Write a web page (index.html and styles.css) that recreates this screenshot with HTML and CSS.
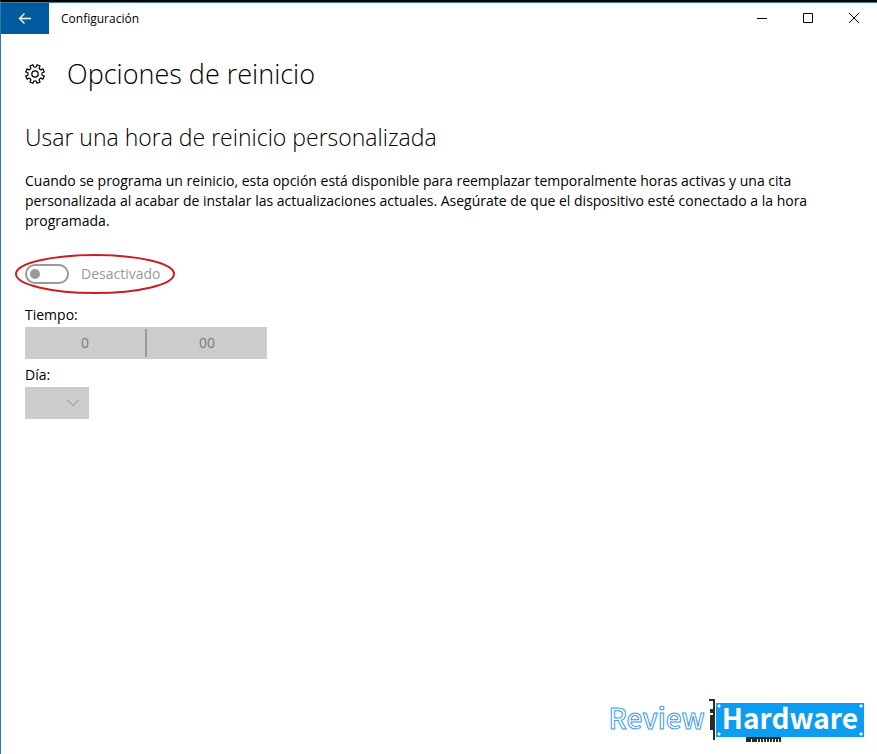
FILE: index.html
```html
<!DOCTYPE html>
<html lang="es">
<head>
<meta charset="UTF-8" />
<meta name="viewport" content="width=device-width, initial-scale=1" />
<title>Configuración</title>
<link rel="stylesheet" href="styles.css">
</head>
<body>
  <!-- Barra de título -->
  <header class="titlebar">
    <button class="back" aria-label="Atrás">
      <svg width="14" height="11" viewBox="0 0 14 11"><path d="M13 5.5H1.5M6.5 0.5L1.5 5.5l5 5" /></svg>
    </button>
    <span class="app-name">Configuración</span>
    <div class="window-buttons">
      <button aria-label="Minimizar">
        <svg width="12" height="12" viewBox="0 0 12 12"><path d="M1 6.5h10" /></svg>
      </button>
      <button aria-label="Maximizar">
        <svg width="12" height="12" viewBox="0 0 12 12"><path d="M1.5 1.5h9v9h-9z" /></svg>
      </button>
      <button aria-label="Cerrar">
        <svg width="12" height="12" viewBox="0 0 12 12"><path d="M1 1l10 10M11 1L1 11" /></svg>
      </button>
    </div>
  </header>

  <main>
    <div class="page-title">
      <svg class="gear" width="20" height="20" viewBox="-10 -10 20 20">
        <path d="M7.2 1.3L9.3 2.1L8 5.1L6 4.1Q4.6 4.6 4.1 6L5.1 8L2.1 9.3L1.3 7.2Q0 6.5-1.3 7.2L-2.1 9.3L-5.1 8L-4.1 6Q-4.6 4.6-6 4.1L-8 5.1L-9.3 2.1L-7.2 1.3Q-6.5 0-7.2-1.3L-9.3-2.1L-8-5.1L-6-4.1Q-4.6-4.6-4.1-6L-5.1-8L-2.1-9.3L-1.3-7.2Q0-6.5 1.3-7.2L2.1-9.3L5.1-8L4.1-6Q4.6-4.6 6-4.1L8-5.1L9.3-2.1L7.2-1.3Q6.5 0 7.2 1.3Z" />
        <circle r="3.2" />
      </svg>
      <h1>Opciones de reinicio</h1>
    </div>

    <h2>Usar una hora de reinicio personalizada</h2>
    <p>Cuando se programa un reinicio, esta opción está disponible para reemplazar temporalmente horas activas y una cita personalizada al acabar de instalar las actualizaciones actuales. Asegúrate de que el dispositivo esté conectado a la hora programada.</p>

    <label class="toggle">
      <input type="checkbox" role="switch" disabled />
      <span>Desactivado</span>
      <!-- Marca roja alrededor del interruptor -->
      <svg class="mark" width="162" height="42" viewBox="0 0 162 42"><ellipse cx="82" cy="21" rx="79" ry="19" /></svg>
    </label>

    <div class="field">
      <span id="time-label">Tiempo:</span>
      <div class="time-picker" role="group" aria-labelledby="time-label">
        <button disabled>0</button>
        <button disabled>00</button>
      </div>
    </div>

    <div class="field">
      <label for="day">Día:</label>
      <div class="day-picker">
        <select id="day" disabled></select>
        <svg width="12" height="8" viewBox="0 0 12 8"><path d="M0.5 1L6 6.5L11.5 1" /></svg>
      </div>
    </div>
  </main>

  <footer class="logo">
    <span class="review">Review</span>
    <svg class="bracket" width="6" height="42" viewBox="0 0 6 42"><path d="M0 0h6v41H4V31H1V16h3v-2H1v-4h3V2H0z" /></svg>
    <div class="board">
      Hardware
      <svg class="pins" width="35" height="5" viewBox="0 0 35 5"><path d="M0 0h35v5h-2V2h-1v3h-2V2h-1v3h-2V2h-1v3h-2V2h-1v3h-2V2h-1v3h-2V2h-1v3h-2V2h-1v3h-2V2h-1v3h-2V2h-1v3H9V2H8v3H6V2H5v3H0z" /></svg>
    </div>
  </footer>
</body>
</html>
```
FILE: styles.css
```css
* {
  box-sizing: border-box;
}
body {
  margin: 0;
  min-height: 100vh;
  display: flex;
  flex-direction: column;
  background: #fff;
  color: #000;
  font-family: "Open Sans", "Noto Sans", sans-serif;
  font-size: 14px;
  line-height: 20px;
  border-top: 2px solid #000;
  border-left: 1px solid #2f78a8;
}
button {
  border: none;
  padding: 0;
  font: inherit;
}
svg {
  display: block;
  fill: none;
  stroke: #000;
}

/* Barra de título */
.titlebar {
  display: flex;
  align-items: center;
  height: 32px;
  border-top: 1px solid #3f7f92;
}
.back {
  width: 48px;
  height: 31px;
  display: grid;
  place-items: center;
  background: #005a9e;
}
.back svg {
  stroke: #fff;
  stroke-width: 1.4;
}
.app-name {
  margin-left: 12px;
  font-size: 12px;
  line-height: 18px;
}
.window-buttons {
  display: flex;
  align-self: flex-start;
  margin-left: auto;
}
.window-buttons button {
  width: 46px;
  height: 30px;
  display: grid;
  place-items: center;
  background: none;
}

/* Contenido */
main {
  flex-grow: 1;
  padding: 20px 24px;
}
.page-title {
  display: flex;
  align-items: center;
  gap: 22px;
}
.gear {
  stroke-width: 1.2;
  stroke-linejoin: round;
}
h1,
h2 {
  margin: 0;
  font-weight: 300;
}
h1 {
  font-size: 27px;
  line-height: 40px;
}
h2 {
  margin-top: 27px;
  font-size: 23px;
  line-height: 32px;
}
p {
  max-width: 800px;
  margin: 18px 0 32px;
}

.toggle {
  position: relative;
  display: flex;
  align-items: center;
  gap: 12px;
  width: max-content;
  height: 22px;
  color: #999;
}
.toggle input {
  appearance: none;
  display: flex;
  align-items: center;
  width: 44px;
  height: 20px;
  margin: 0;
  padding-left: 3px;
  border: 2px solid #999;
  border-radius: 10px;
}
.toggle input::before {
  content: "";
  width: 10px;
  height: 10px;
  border-radius: 50%;
  background: #999;
}
.mark {
  position: absolute;
  left: -12px;
  top: -10px;
  stroke: #c81e1e;
  stroke-width: 2;
}

.field {
  margin-top: 6px;
}
.toggle + .field {
  margin-top: 20px;
}
.time-picker {
  display: flex;
  width: 242px;
  margin-top: 2px;
  background: #ccc;
}
.time-picker button {
  flex: 1;
  height: 32px;
  background: none;
  color: #7a7a7a;
}
.time-picker button + button {
  border-left: 2px solid #999;
  height: 28px;
  margin: 2px 0;
}
.day-picker {
  position: relative;
  width: 64px;
}
.day-picker select {
  appearance: none;
  display: block;
  width: 100%;
  height: 32px;
  margin-top: 2px;
  border: none;
  border-radius: 0;
  background: #ccc;
  opacity: 1;
}
.day-picker svg {
  position: absolute;
  right: 10px;
  top: 12px;
  stroke: #888;
}

/* Logo */
.logo {
  display: flex;
  align-items: center;
  justify-content: flex-end;
  padding: 0 13px 13px 0;
  font-family: "Noto Sans CJK JP", "Noto Sans CJK SC", sans-serif;
  font-size: 28px;
  font-weight: 500;
  line-height: 28px;
}
.review {
  margin-right: 4px;
  padding-bottom: 6px;
  color: #fff;
  -webkit-text-stroke: 1px #3b9bea;
}
.bracket {
  fill: #2b2b2b;
  stroke: none;
}
.board {
  position: relative;
  padding: 0 6px 6px;
  margin-left: 1px;
  background: radial-gradient(circle at 3px 3px, #fff 1px, transparent 2px),
    radial-gradient(circle at calc(100% - 3px) 3px, #fff 1px, transparent 2px),
    radial-gradient(circle at 3px calc(100% - 3px), #fff 1px, transparent 2px),
    radial-gradient(circle at calc(100% - 3px) calc(100% - 3px), #fff 1px, transparent 2px),
    #0c9cf0;
  color: #fff;
  font-weight: 700;
}
.pins {
  position: absolute;
  left: 30px;
  top: 100%;
  fill: #2b2b2b;
  stroke: none;
}
```
